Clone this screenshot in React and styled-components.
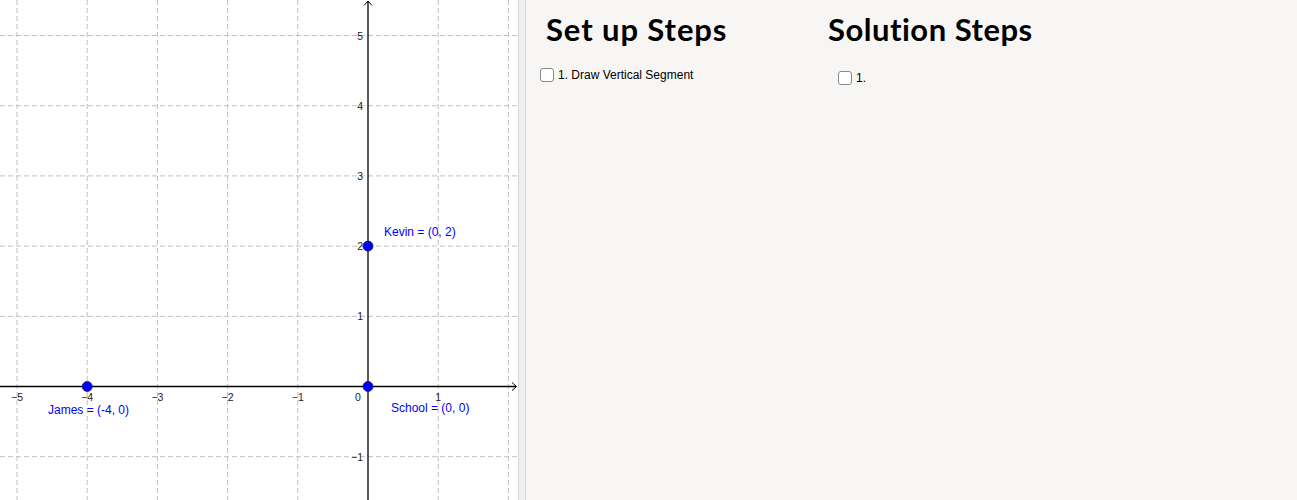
import React from 'react'
import styled, { createGlobalStyle } from 'styled-components'

const Global = createGlobalStyle`
  html, body {
    margin: 0;
    padding: 0;
    background: #ffffff;
    font-family: "Liberation Sans", Arial, sans-serif;
  }
`

const Applet = styled.div`
  display: flex;
  width: 1297px;
  height: 500px;
  overflow: hidden;
`

const GraphPanel = styled.div`
  width: 518px;
  height: 500px;
  flex: none;
  background: #ffffff;
`

const Splitter = styled.div`
  width: 6px;
  flex: none;
  background: #f0f0f0;
  border-left: 1px solid #d4d4d4;
  border-right: 1px solid #dcdcdc;
`

const StepsPanel = styled.div`
  flex: 1;
  background: #f7f6f5;
  display: grid;
  grid-template-columns: 288px 1fr;
  align-content: start;
`

const Column = styled.div`
  display: flex;
  flex-direction: column;
  padding-left: ${props => props.indent}px;
`

const Heading = styled.h2`
  margin: 0;
  padding: 9px 0 0 ${props => props.shift}px;
  font-family: Lato, "Open Sans", sans-serif;
  font-weight: 700;
  font-size: 31px;
  line-height: 40px;
  color: #000;
  letter-spacing: ${props => props.spacing}px;
`

const Step = styled.label`
  display: flex;
  align-items: center;
  gap: 4px;
  margin-top: ${props => props.top}px;
  margin-left: ${props => props.shift}px;
  font-size: 12px;
  color: #000;
`

const Box = styled.span`
  width: 14px;
  height: 14px;
  border: 1.5px solid #8a8a8a;
  border-radius: 3px;
  background: #fff;
  box-sizing: border-box;
`

const U = 70.2
const OX = 368
const OY = 386.5
const xs = [-5, -4, -3, -2, -1, 0, 1, 2]
const ys = [5, 4, 3, 2, 1, 0, -1]

const points = [
  { name: 'Kevin = (0, 2)', x: 0, y: 2, lx: 384, ly: 236 },
  { name: 'James = (-4, 0)', x: -4, y: 0, lx: 48, ly: 414 },
  { name: 'School = (0, 0)', x: 0, y: 0, lx: 391, ly: 412 },
]

const minus = v => (v < 0 ? '\u2212' + Math.abs(v) : String(v))

const Graph = () => (
  <svg width="518" height="500" viewBox="0 0 518 500" fontFamily="Liberation Sans, Arial, sans-serif">
    {xs.map(v => {
      const x = OX + v * U
      return v === 0 ? null : (
        <line key={'gx' + v} x1={x} y1={0} x2={x} y2={500} stroke="#c0c0c0" strokeDasharray="5 3" />
      )
    })}
    {ys.map(v => {
      const y = OY - v * U
      return v === 0 ? null : (
        <line key={'gy' + v} x1={0} y1={y} x2={518} y2={y} stroke="#c0c0c0" strokeDasharray="5 3" />
      )
    })}
    <line x1={0} y1={OY} x2={516} y2={OY} stroke="#000" strokeWidth="1.3" />
    <polyline points={`512,${OY - 4} 516.5,${OY} 512,${OY + 4}`} fill="none" stroke="#000" />
    <line x1={OX} y1={1} x2={OX} y2={500} stroke="#000" strokeWidth="1.3" />
    <polyline points="364,5.5 368,1 372,5.5" fill="none" stroke="#000" />
    {xs.map(v => {
      if (v === 0 || v === 2) return null
      return (
        <text key={'tx' + v} x={OX + v * U} y={OY + 14} fontSize="10.5" fill="#222" textAnchor="middle">
          {minus(v)}
        </text>
      )
    })}
    <text x={358} y={OY + 14} fontSize="10.5" fill="#222" textAnchor="middle">0</text>
    {ys.map(v => {
      if (v === 0) return null
      return (
        <text key={'ty' + v} x={OX - 5} y={OY - v * U + 4} fontSize="10.5" fill="#222" textAnchor="end">
          {minus(v)}
        </text>
      )
    })}
    {points.map(p => (
      <g key={p.name}>
        <circle cx={OX + p.x * U} cy={OY - p.y * U} r="5" fill="#0000ff" stroke="#1a1a40" strokeWidth="0.8" />
        <text x={p.lx} y={p.ly} fontSize="12" fill="#0000ff">{p.name}</text>
      </g>
    ))}
  </svg>
)

export default function App() {
  return (
    <Applet>
      <Global />
      <GraphPanel>
        <Graph />
      </GraphPanel>
      <Splitter />
      <StepsPanel>
        <Column indent={14}>
          <Heading shift={6} spacing={0.9}>Set up Steps</Heading>
          <Step top={19} shift={0}>
            <Box />
            1. Draw Vertical Segment
          </Step>
        </Column>
        <Column indent={0}>
          <Heading shift={14} spacing={0.5}>Solution Steps</Heading>
          <Step top={22} shift={24}>
            <Box />
            1.
          </Step>
        </Column>
      </StepsPanel>
    </Applet>
  )
}
